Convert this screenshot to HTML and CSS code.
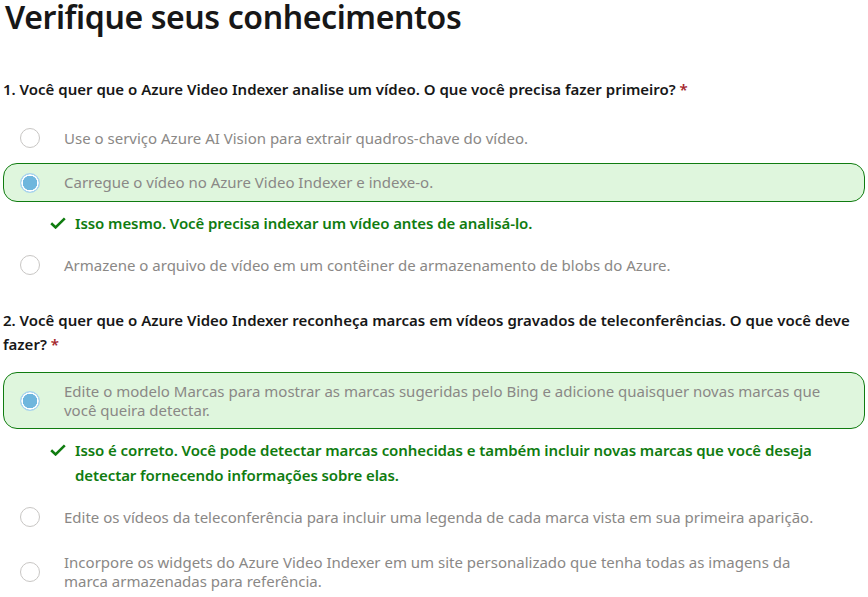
FILE: index.html
```html
<!DOCTYPE html>
<html lang="pt-BR">
<head>
<meta charset="utf-8">
<title>Verifique seus conhecimentos</title>
<link rel="stylesheet" href="styles.css">
</head>
<body>
<main class="quiz">
  <h1 class="title">Verifique seus conhecimentos</h1>

  <section class="question">
    <p class="prompt">1. Você quer que o Azure Video Indexer analise um vídeo. O que você precisa fazer primeiro? <span class="req">*</span></p>
    <div class="options">
      <div class="option"><span class="radio"></span><span class="label">Use o serviço Azure AI Vision para extrair quadros-chave do vídeo.</span></div>
      <div class="option correct"><span class="radio checked"></span><span class="label">Carregue o vídeo no Azure Video Indexer e indexe-o.</span></div>
      <div class="feedback"><svg class="check" viewBox="0 0 16 12" width="16" height="12"><path d="M1.2 6.2 L5.6 10.4 L14.8 1.4" fill="none" stroke="#107c10" stroke-width="2.6"/></svg><span>Isso mesmo. Você precisa indexar um vídeo antes de analisá-lo.</span></div>
      <div class="option"><span class="radio"></span><span class="label">Armazene o arquivo de vídeo em um contêiner de armazenamento de blobs do Azure.</span></div>
    </div>
  </section>

  <section class="question">
    <p class="prompt">2. Você quer que o Azure Video Indexer reconheça marcas em vídeos gravados de teleconferências. O que você deve fazer? <span class="req">*</span></p>
    <div class="options">
      <div class="option correct"><span class="radio checked"></span><span class="label">Edite o modelo Marcas para mostrar as marcas sugeridas pelo Bing e adicione quaisquer novas marcas que você queira detectar.</span></div>
      <div class="feedback"><svg class="check" viewBox="0 0 16 12" width="16" height="12"><path d="M1.2 6.2 L5.6 10.4 L14.8 1.4" fill="none" stroke="#107c10" stroke-width="2.6"/></svg><span>Isso é correto. Você pode detectar marcas conhecidas e também incluir novas marcas que você deseja detectar fornecendo informações sobre elas.</span></div>
      <div class="option"><span class="radio"></span><span class="label">Edite os vídeos da teleconferência para incluir uma legenda de cada marca vista em sua primeira aparição.</span></div>
      <div class="option"><span class="radio"></span><span class="label">Incorpore os widgets do Azure Video Indexer em um site personalizado que tenha todas as imagens da marca armazenadas para referência.</span></div>
    </div>
  </section>
</main>
</body>
</html>
```

FILE: styles.css
```css
* { box-sizing: border-box; }
html, body { margin: 0; padding: 0; background: #ffffff; }
body {
  font-family: "Noto Sans", "Open Sans", "Liberation Sans", sans-serif;
  color: #171717;
}
.quiz {
  padding: 0 3px 0 3px;
}
.title {
  margin: 0;
  font-size: 32px;
  font-weight: 600;
  line-height: 34px;
  letter-spacing: -0.4px;
  color: #171717;
  padding-left: 2px;
}
.question { margin: 0; }
.question:first-of-type { margin-top: 43px; }
.question + .question { margin-top: 22px; }
.prompt {
  margin: 0 0 16px 0;
  font-size: 15px;
  font-weight: 600;
  line-height: 24px;
  letter-spacing: 0;
  padding-right: 10px;
}
.req { color: #a4262c; }
.options {
  display: flex;
  flex-direction: column;
  gap: 4px;
}
.option {
  display: flex;
  align-items: center;
  gap: 24px;
  padding: 10px 30px 10px 16px;
  border: 1px solid transparent;
  border-radius: 14px;
  font-size: 15px;
  line-height: 19px;
  letter-spacing: 0;
  color: #8a8886;
}
.option.correct {
  padding-top: 8.5px;
  padding-bottom: 8.5px;
  background: #dff6dd;
  border-color: #107c10;
}
.radio {
  flex: none;
  width: 20px;
  height: 20px;
  border-radius: 50%;
  border: 1px solid #c8c6c4;
  background: #fff;
}
.radio.checked {
  border: 1px solid #a7d3ee;
  background: radial-gradient(circle, #6fb6dd 0 7px, #ffffff 7.5px 8.4px, #a7d3ee 8.8px);
}
.feedback {
  display: flex;
  align-items: flex-start;
  gap: 9px;
  padding: 4.5px 40px 4.5px 47px;
  font-size: 15px;
  font-weight: 600;
  line-height: 25px;
  letter-spacing: -0.08px;
  color: #107c10;
}
.check { flex: none; margin-top: 6.5px; }
```
